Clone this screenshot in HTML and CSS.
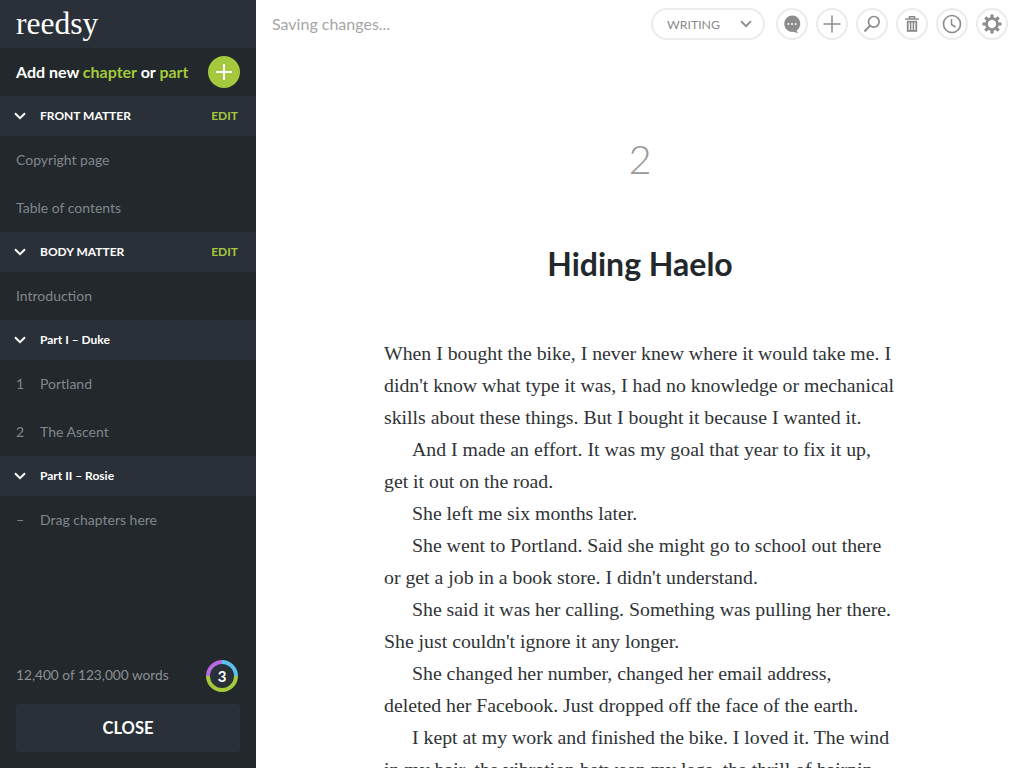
FILE: index.html
```html
<!DOCTYPE html>
<html lang="en">
<head>
<meta charset="utf-8">
<title>Reedsy editor</title>
<link rel="stylesheet" href="styles.css">
</head>
<body>
<div class="app">
  <aside class="sidebar">
    <div class="brand">reedsy</div>
    <div class="add-row">
      <div class="add-text">Add new <span class="lime">chapter</span> or <span class="lime">part</span></div>
      <div class="add-btn"><svg width="18" height="18" viewBox="0 0 18 18"><path d="M9 1v16M1 9h16" stroke="#fff" stroke-width="2" fill="none"/></svg></div>
    </div>
    <div class="section"><svg class="chev" width="12" height="8" viewBox="0 0 12 8"><path d="M1 1.200l5 5 5-5" stroke="#fff" stroke-width="2" fill="none"/></svg><span class="section-title caps">FRONT MATTER</span><span class="edit">EDIT</span></div>
    <div class="item">Copyright page</div>
    <div class="item">Table of contents</div>
    <div class="section"><svg class="chev" width="12" height="8" viewBox="0 0 12 8"><path d="M1 1.200l5 5 5-5" stroke="#fff" stroke-width="2" fill="none"/></svg><span class="section-title caps">BODY MATTER</span><span class="edit">EDIT</span></div>
    <div class="item">Introduction</div>
    <div class="section"><svg class="chev" width="12" height="8" viewBox="0 0 12 8"><path d="M1 1.200l5 5 5-5" stroke="#fff" stroke-width="2" fill="none"/></svg><span class="section-title">Part I – Duke</span></div>
    <div class="item"><span class="num">1</span>Portland</div>
    <div class="item"><span class="num">2</span>The Ascent</div>
    <div class="section"><svg class="chev" width="12" height="8" viewBox="0 0 12 8"><path d="M1 1.200l5 5 5-5" stroke="#fff" stroke-width="2" fill="none"/></svg><span class="section-title">Part II – Rosie</span></div>
    <div class="item"><span class="num">–</span>Drag chapters here</div>
    <div class="foot">
      <div class="count">
        <span class="count-text">12,400 of 123,000 words</span>
        <div class="ring"><svg width="32" height="32" viewBox="0 0 32 32"><circle cx="16" cy="16" r="13" fill="#2a3038"/><g fill="none" stroke-width="4"><path d="M2 16A14 14 0 0 1 16 2" stroke="#b66be0"/><path d="M16 2A14 14 0 0 1 30 16" stroke="#5cc0ee"/><path d="M30 16A14 14 0 0 1 2 16" stroke="#a4c93c"/></g></svg><span class="ring-num">3</span></div>
      </div>
      <div class="close">CLOSE</div>
    </div>
  </aside>
  <main class="main">
    <header class="topbar">
      <div class="saving">Saving changes...</div>
      <div class="tools">
        <div class="mode"><span>WRITING</span><svg width="12" height="8" viewBox="0 0 12 8"><path d="M1 1.200l5 5 5-5" stroke="#8a8a8a" stroke-width="1.800" fill="none"/></svg></div>
        <div class="tool"><svg width="20" height="20" viewBox="0 0 20 20"><path d="M10 1.500a8.200 8.200 0 0 1 4.600 15l1.400 2.700-4.400-1.400A8.200 8.200 0 1 1 10 1.500z" fill="#8c8c8c"/><circle cx="6.400" cy="10" r="1" fill="#fff"/><circle cx="10" cy="10" r="1" fill="#fff"/><circle cx="13.600" cy="10" r="1" fill="#fff"/></svg></div>
        <div class="tool"><svg width="20" height="20" viewBox="0 0 20 20"><path d="M10 1.500v17M1.500 10h17" stroke="#8c8c8c" stroke-width="1.500" fill="none"/></svg></div>
        <div class="tool"><svg width="20" height="20" viewBox="0 0 20 20"><circle cx="11.800" cy="7.800" r="5.300" stroke="#8c8c8c" stroke-width="1.700" fill="none"/><path d="M8 11.600l-5.500 5.900" stroke="#8c8c8c" stroke-width="2" fill="none"/></svg></div>
        <div class="tool"><svg width="20" height="20" viewBox="0 0 20 20"><path d="M3.200 5h13.600M7.500 5V2.800h5V5" stroke="#8c8c8c" stroke-width="1.500" fill="none"/><path d="M4.800 6.800h10.400v11H4.800z" fill="#8c8c8c"/><path d="M7.200 8.500v7.600M10 8.500v7.600M12.800 8.500v7.600" stroke="#fff" stroke-width="1.200" fill="none"/></svg></div>
        <div class="tool"><svg width="20" height="20" viewBox="0 0 20 20"><circle cx="10" cy="10" r="8.500" stroke="#8c8c8c" stroke-width="1.600" fill="none"/><path d="M9.500 5v5.500l4 2.500" stroke="#8c8c8c" stroke-width="1.500" fill="none"/></svg></div>
        <div class="tool"><svg width="22" height="22" viewBox="0 0 22 22"><circle cx="11" cy="11" r="5.500" stroke="#8c8c8c" stroke-width="2.600" fill="none"/><path d="M11 1.500v4M11 16.500v4M1.500 11h4M16.500 11h4M4.300 4.300l2.800 2.800M14.900 14.900l2.800 2.800M17.700 4.300l-2.800 2.800M7.100 14.900l-2.800 2.800" stroke="#8c8c8c" stroke-width="3.200" fill="none"/></svg></div>
      </div>
    </header>
    <article class="page">
      <div class="chap-num">2</div>
      <h1 class="chap-title">Hiding Haelo</h1>
      <div class="prose">
        <p class="first">When I bought the bike, I never knew where it would take me. I didn't know what type it was, I had no knowledge or mechanical skills about these things. But I bought it because I wanted it.</p>
        <p>And I made an effort. It was my goal that year to fix it up, get it out on the road.</p>
        <p>She left me six months later.</p>
        <p>She went to Portland. Said she might go to school out there or get a job in a book store. I didn't understand.</p>
        <p>She said it was her calling. Something was pulling her there. She just couldn't ignore it any longer.</p>
        <p>She changed her number, changed her email address,<br>deleted her Facebook. Just dropped off the face of the earth.</p>
        <p>I kept at my work and finished the bike. I loved it. The wind in my hair, the vibration between my legs, the thrill of hairpin turns.</p>
      </div>
    </article>
  </main>
</div>
</body>
</html>
```
FILE: styles.css
```css
* { box-sizing: border-box; }
html, body { margin: 0; height: 100%; overflow: hidden; background: #fff; }
body { font-family: "Lato", sans-serif; }
.app { display: flex; height: 768px; overflow: hidden; }
.sidebar { width: 256px; flex: none; background: #22282b; display: flex; flex-direction: column; color: #8a9094; }
.brand { height: 48px; background: #2a3038; color: #fff; font-family: "Liberation Serif", serif; font-size: 31.500px; line-height: 48px; padding-left: 16px; }
.add-row { height: 48px; display: flex; align-items: center; justify-content: space-between; padding: 0 16px; }
.add-text { color: #fff; font-size: 16px; font-weight: 700; padding-bottom: 2px; }
.lime { color: #a4c93c; }
.add-btn { width: 32px; height: 32px; border-radius: 50%; background: #a4c93c; display: flex; align-items: center; justify-content: center; }
.section { height: 40px; background: #2a3038; display: flex; align-items: center; padding: 0 18px 0 14px; color: #fff; font-size: 12px; font-weight: 700; }
.section-title { padding-bottom: 2px; }
.chev { margin-right: 14px; }
.edit { margin-left: auto; color: #a4c93c; font-size: 12px; font-weight: 700; padding-bottom: 2px; }
.item { height: 48px; display: flex; align-items: center; padding: 0 0 2px 16px; font-size: 14px; color: #81878b; }
.num { width: 24px; }
.foot { margin-top: auto; padding: 0 16px 16px; }
.count { display: flex; align-items: center; justify-content: space-between; font-size: 13.700px; height: 32px; margin-bottom: 12px; padding-right: 2px; }
.count-text { padding-bottom: 4px; }
.ring { position: relative; width: 32px; height: 32px; display: flex; align-items: center; justify-content: center; }
.ring svg { position: absolute; inset: 0; }
.ring-num { color: #fff; font-size: 15px; font-weight: 700; position: relative; }
.close { height: 48px; background: #2a3038; border-radius: 3px; color: #fff; font-size: 16.500px; font-weight: 700; display: flex; align-items: center; justify-content: center; }
.main { flex: 1; min-width: 0; overflow: hidden; }
.topbar { height: 48px; display: flex; align-items: center; justify-content: space-between; padding: 0 16px; }
.saving { font-size: 16px; color: #a5a5a5; padding-bottom: 2px; }
.tools { display: flex; align-items: center; gap: 8px; }
.mode { width: 114px; height: 32px; border: 2px solid #ebebeb; border-radius: 16px; display: flex; align-items: center; justify-content: space-between; padding: 0 11px 0 14px; margin-right: 3px; font-size: 12.300px; color: #8a8a8a; }
.tool { width: 32px; height: 32px; border: 2px solid #ebebeb; border-radius: 50%; display: flex; align-items: center; justify-content: center; }
.page { width: 512px; height: 720px; margin: 0 auto; overflow: hidden; }
.chap-num { font-size: 40px; font-weight: 300; color: #999; text-align: center; margin-top: 88px; line-height: 46px; }
.chap-title { font-size: 32px; font-weight: 700; color: #22282b; text-align: center; margin: 58px 0 0; line-height: 48px; }
.prose { margin-top: 49px; font-family: "Liberation Serif", serif; font-size: 19.800px; line-height: 32px; color: #2f3336; }
.prose p { margin: 0; text-indent: 28px; }
.prose p.first { text-indent: 0; }
```
